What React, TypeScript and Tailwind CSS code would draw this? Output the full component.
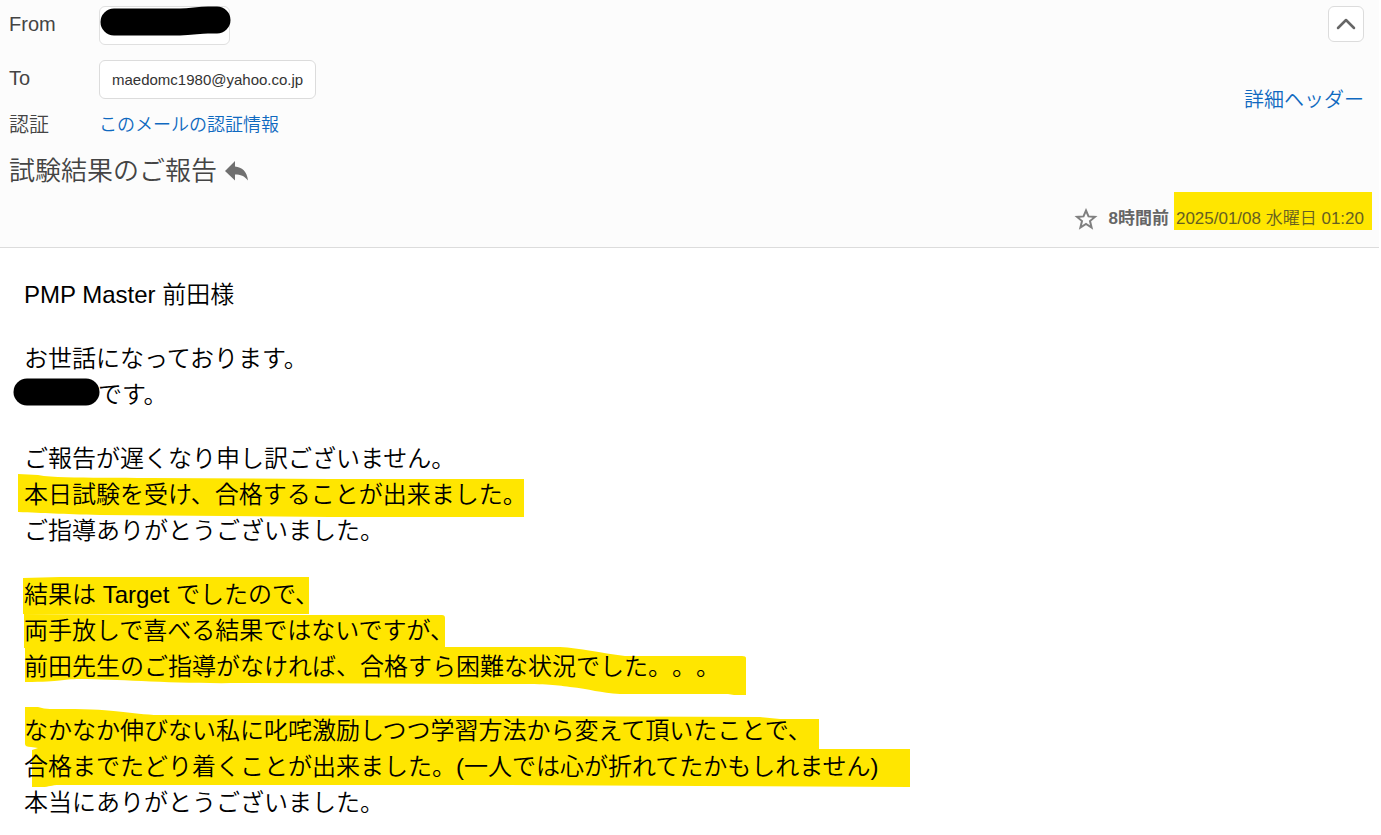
import type { ReactNode } from "react";

interface HeaderRowProps {
  label: string;
  children: ReactNode;
}

function HeaderRow({ label, children }: HeaderRowProps) {
  return (
    <div className="flex items-start">
      <dt className="w-[90px] shrink-0 text-[20px] leading-9 text-[#444]">{label}</dt>
      <dd className="flex">{children}</dd>
    </div>
  );
}

// Marker strokes are drawn behind the paragraph, in its own pixel coordinates
function Marker({ paths }: { paths: string[] }) {
  return (
    <svg
      aria-hidden="true"
      className="pointer-events-none absolute -top-px left-0 -z-10 h-full w-full overflow-visible"
      fill="#ffe600"
    >
      {paths.map((d) => (
        <path key={d} d={d} />
      ))}
    </svg>
  );
}

function Redaction({ d }: { d: string }) {
  return (
    <svg
      aria-hidden="true"
      className="pointer-events-none absolute top-0 left-0 h-full w-full overflow-visible"
      fill="none"
      stroke="#000"
      strokeWidth="27"
      strokeLinecap="round"
    >
      <path d={d} />
    </svg>
  );
}

interface Paragraph {
  lines: ReactNode[];
  marks?: string[];
}

const paragraphs: Paragraph[] = [
  { lines: ["PMP Master 前田様"] },
  {
    lines: [
      "お世話になっております。",
      <>
        <span className="relative inline-block h-[27px] w-[74px] align-middle">
          <Redaction d="M3 9H62" />
        </span>
        です。
      </>,
    ],
  },
  {
    lines: [
      "ご報告が遅くなり申し訳ございません。",
      "本日試験を受け、合格することが出来ました。",
      "ご指導ありがとうございました。",
    ],
    marks: [
      "M-6 34L14 35C36 39 76 37 126 38L306 39H500V77H306L76 75C36 74 21 73 -6 72Z",
    ],
  },
  {
    lines: [
      "結果は Target でしたので、",
      "両手放しで喜べる結果ではないですが、",
      "前田先生のご指導がなければ、合格すら困難な状況でした。。。",
    ],
    marks: [
      "M-1 2L36 1H285V38H-1Z",
      "M0 38L136 39H418Q421 39 421 42V71H536C556 72 576 77 601 80H718Q722 80 722 82V119H710L704 118H596C576 117 566 113 546 111C526 108 516 108 456 108L216 107C146 108 96 103 56 103C36 103 40 106 1 106V72H0Z",
    ],
  },
  {
    lines: [
      "なかなか伸びない私に叱咤激励しつつ学習方法から変えて頂いたことで、",
      "合格までたどり着くことが出来ました。(一人では心が折れてたかもしれません)",
      "本当にありがとうございました。",
    ],
    marks: [
      "M1 -5H14Q20 -3 26 -3C96 -4 100 2 136 3L476 4L736 5L756 7H795V37H886V75L676 74L476 73H36C26 73 26 75 18 75H8V38L14 36L7 35Q1 35 1 32Z",
    ],
  },
];

export default function App() {
  return (
    <main className="min-h-screen bg-white font-['Liberation_Sans','Noto_Sans_CJK_JP',sans-serif] font-[350] [text-spacing-trim:space-all]">
      <header className="mr-0.5 border-b border-[#dcdcdc] bg-[#fcfcfc] pt-1.5 pr-[15px] pb-2 pl-[9px]">
        <div className="flex justify-between">
          <dl>
            <HeaderRow label="From">
              <span className="relative h-[39px] w-[131px] rounded-md border border-[#e0e0e0] bg-white">
                <Redaction d="M14 15H80C92 15 98 13 108 13H117" />
              </span>
            </HeaderRow>
            <div className="mt-[15px]">
              <HeaderRow label="To">
                <span className="rounded-md border border-[#dcdcdc] bg-white px-3 text-[15px] leading-[37px] text-[#333]">
                  maedomc1980@yahoo.co.jp
                </span>
              </HeaderRow>
            </div>
            <div className="mt-2">
              <HeaderRow label="認証">
                <a href="#auth" className="text-[18px] leading-9 text-[#0f69c0]">
                  このメールの認証情報
                </a>
              </HeaderRow>
            </div>
          </dl>
          <div className="flex flex-col items-end gap-[43px]">
            <button
              type="button"
              aria-label="ヘッダーを閉じる"
              className="flex size-9 items-center justify-center rounded-md border border-[#dcdcdc] bg-white"
            >
              <svg
                width="20"
                height="12"
                viewBox="0 0 20 12"
                fill="none"
                stroke="#666"
                strokeWidth="2.5"
                strokeLinecap="round"
                strokeLinejoin="round"
              >
                <path d="M2 10L10 2L18 10" />
              </svg>
            </button>
            <a href="#detail" className="text-[20px] leading-[30px] text-[#0f69c0]">
              詳細ヘッダー
            </a>
          </div>
        </div>

        <div className="mt-2 flex items-center gap-2">
          <h1 className="text-[26px] leading-10 text-[#444]">試験結果のご報告</h1>
          <button type="button" aria-label="返信">
            <svg width="24" height="20" viewBox="0 0 24 20" fill="#707070">
              <path d="M0 10L10 0V5.5C17 6 22 10.500 23 19.500C19.500 15 15.500 13.500 10 13.500V19.500Z" />
            </svg>
          </button>
        </div>

        <div className="mt-2 flex h-10 items-center justify-end text-[17px] text-[#666]">
          <button type="button" aria-label="スターを付ける" className="mr-2.5">
            <svg width="24" height="22" viewBox="0 0 24 22" fill="none" stroke="#808080" strokeWidth="2">
              <path d="M12 2.500L14.500 8.400L21 8.900L16 13.100L17.600 19.500L12 16L6.400 19.500L8 13.100L3 8.900L9.500 8.400Z" />
            </svg>
          </button>
          <span className="mr-[5px] font-bold">8時間前</span>
          <time
            dateTime="2025-01-08T01:20"
            className="-mt-4 -mr-2 bg-[#ffe600] pt-[15px] pr-2 pl-0.5 leading-[23px] text-[#666020]"
          >
            2025/01/08 水曜日 01:20
          </time>
        </div>
      </header>

      <article className="flex flex-col gap-7 px-6 pt-[29px] pb-3.5 text-[24px] leading-9 text-black">
        {paragraphs.map(({ lines, marks }, i) => (
          <p key={i} className="relative isolate">
            {marks ? <Marker paths={marks} /> : null}
            {lines.map((line, j) => (
              <span key={j} className="block">
                {line}
              </span>
            ))}
          </p>
        ))}
      </article>
    </main>
  );
}
